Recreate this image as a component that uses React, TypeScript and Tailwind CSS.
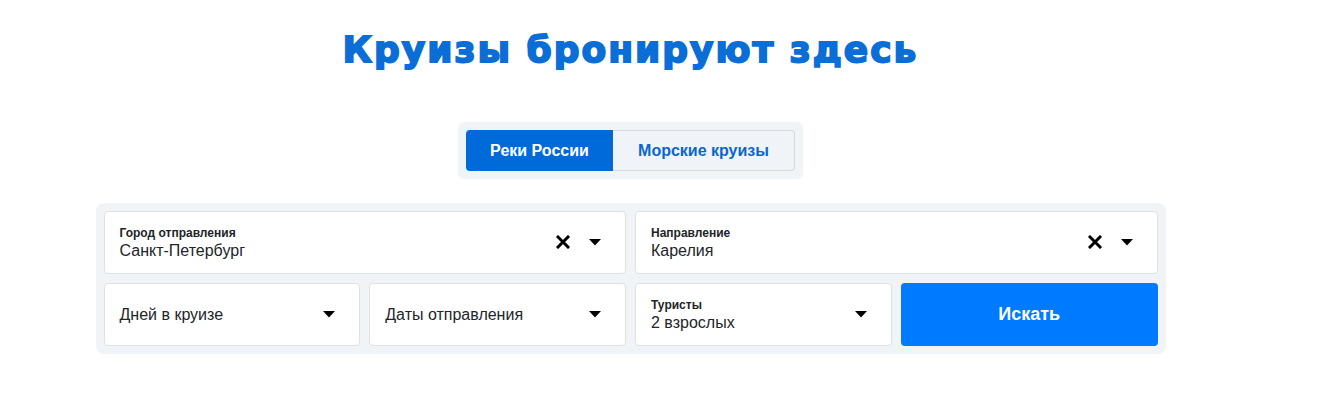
import React from "react";

const Caret = () => (
  <svg width="12" height="7" viewBox="0 0 12 7" className="shrink-0">
    <path d="M0 0 L12 0 L6 6.5 Z" fill="#000" />
  </svg>
);

const Cross = () => (
  <svg width="14" height="14" viewBox="0 0 14 14" className="shrink-0">
    <path d="M2 2 L12 12 M12 2 L2 12" stroke="#000" strokeWidth="3" strokeLinecap="square" />
  </svg>
);

function Field({ label, value, clear }: { label?: string; value: string; clear?: boolean }) {
  return (
    <div className="flex h-[63px] items-center rounded-[4px] border border-[#dee2e6] bg-white pl-[15px] pr-[24px]">
      <div className="flex min-w-0 flex-1 flex-col">
        {label && (
          <span className="text-[12px] font-bold leading-[15px] text-[#212529]">{label}</span>
        )}
        <span className="text-[16px] leading-[19px] text-[#212529]">{value}</span>
      </div>
      {clear && (
        <span className="mr-[19px] mt-[-2px]">
          <Cross />
        </span>
      )}
      <Caret />
    </div>
  );
}

export default function App() {
  return (
    <div
      className="min-h-[395px] w-full bg-white"
      style={{ fontFamily: '"Liberation Sans", Arial, sans-serif' }}
    >
      <div className="mx-auto w-[1070px] translate-x-[-30px] pt-[30px]">
        <h1
          className="text-center text-[36px] font-bold leading-[40px] tracking-[2px] text-[#0a6ed6]"
          style={{ fontFamily: '"DejaVu Sans", sans-serif', WebkitTextStroke: "1.8px #0a6ed6" }}
        >
          Круизы бронируют здесь
        </h1>
        <div className="mt-[52px] flex justify-center">
          <div className="flex rounded-[6px] bg-[#f1f4f7] p-[8px]">
            <button className="h-[41px] w-[147px] rounded-l-[4px] bg-[#006ad9] text-[16px] font-bold text-white">
              Реки России
            </button>
            <button className="h-[41px] w-[182px] rounded-r-[4px] border border-l-0 border-[#d3d9df] bg-[#f0f4f8] text-[16px] font-bold text-[#0a67c9]">
              Морские круизы
            </button>
          </div>
        </div>
        <div className="mt-[24px] rounded-[8px] bg-[#f1f4f7] p-[8px]">
          <div className="grid grid-cols-2 gap-x-[9px]">
            <Field label="Город отправления" value="Санкт-Петербург" clear />
            <Field label="Направление" value="Карелия" clear />
          </div>
          <div className="mt-[9px] grid grid-cols-4 gap-x-[9px]">
            <Field value="Дней в круизе" />
            <Field value="Даты отправления" />
            <Field label="Туристы" value="2 взрослых" />
            <button className="h-[63px] rounded-[4px] bg-[#007bff] text-[18px] font-bold text-white">
              Искать
            </button>
          </div>
        </div>
      </div>
    </div>
  );
}
